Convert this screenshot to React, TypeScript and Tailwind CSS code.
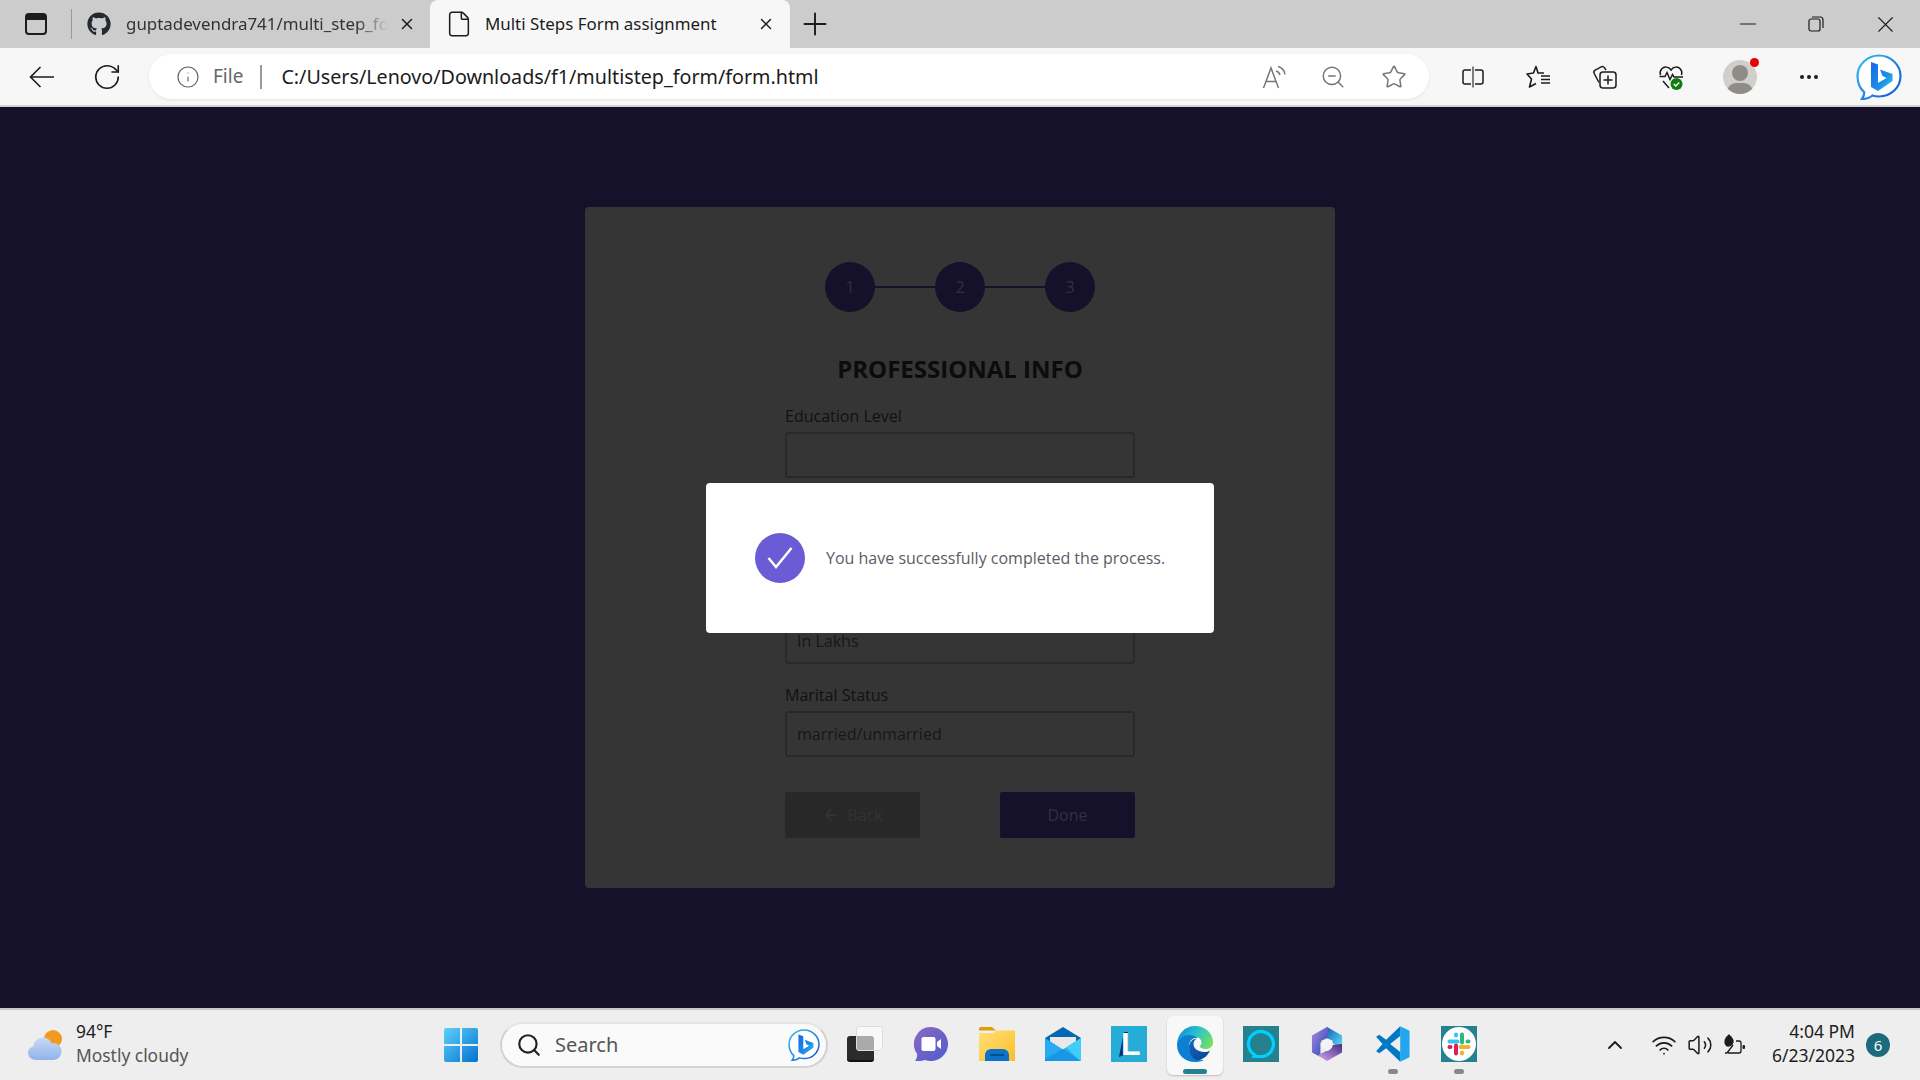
import { ArrowLeft, ChevronUp, File, Info, Minus, Plus, RotateCw, Search, Star, Volume2, Wifi, X, ZoomOut } from "lucide-react";
import { FaGithub } from "react-icons/fa";

// toolbar icons that lucide has no match for
const SplitIcon = () => (
  <svg viewBox="0 0 24 24" className="w-6 h-6 shrink-0" fill="none" stroke="#1c1c1c" strokeWidth="1.5">
    <path d="M10 5H4a2 2 0 0 0-2 2v10a2 2 0 0 0 2 2h6M14 5h6a2 2 0 0 1 2 2v10a2 2 0 0 1-2 2h-6" />
    <path d="M12 1.5v21" stroke="#555" />
  </svg>
);

const FavoritesIcon = () => (
  <svg viewBox="0 0 26 24" className="w-[26px] h-6 shrink-0" fill="none" stroke="#1c1c1c" strokeWidth="1.6" strokeLinejoin="round">
    <path d="M18 8h-6L10 1.500 7.500 8 1 9l4.500 5-2 8 6.500-3.500" />
    <path d="M15 11h9M15 14.500h9M15 18h9" />
  </svg>
);

const CollectionsIcon = () => (
  <svg viewBox="0 0 26 26" className="w-[26px] h-[26px] shrink-0" fill="none" stroke="#1c1c1c" strokeWidth="1.5">
    <path d="M7 18.5L2.2 9.5a2.5 2.5 0 0 1 1-3.3l6-3.4a2.5 2.5 0 0 1 3.2.8l1.6 2.6" />
    <rect x="8" y="8" width="16" height="16" rx="3" />
    <path d="M16 11.5v9M11.5 16h9" />
  </svg>
);

const HealthIcon = () => (
  <svg viewBox="0 0 26 26" className="w-[26px] h-[26px] shrink-0" fill="none">
    <path d="M2.5 11C1 6 5 2.5 8.5 3c2 .2 3.5 1.5 4.500 3 1-1.500 2.500-2.800 4.500-3 3.500-.5 7.500 3 6 8M1.500 12.500H7l2-4 3 7 2.500-5 1.500 2.500h9M5 17l6 7" stroke="#1c1c1c" strokeWidth="1.500" />
    <circle cx="18.500" cy="20" r="6" fill="#107c10" />
    <path d="M15.800 20l2 2 3.400-3.500" stroke="#fff" strokeWidth="1.500" />
  </svg>
);

const ReadAloudIcon = () => (
  <svg viewBox="0 0 26 26" className="w-[26px] h-[26px] shrink-0" fill="none" stroke="#777" strokeWidth="1.500">
    <path d="M1.500 24L9 4l7.500 20M4 17.500h10" />
    <path d="M14 7c2 .5 3.500 2 4 4M16 2.500c3.500 1 6.500 4 7 8" />
  </svg>
);

const BingIcon = ({ size, id }: { size: string; id: string }) => (
  <svg viewBox="0 0 46 46" className={size}>
    <defs>
      <linearGradient id={id} x1="0" y1="0" x2="1" y2="1">
        <stop offset="0" stopColor="#35c1f1" />
        <stop offset="1" stopColor="#1350d8" />
      </linearGradient>
      <linearGradient id={id + "b"} x1="0" y1="0" x2="1" y2="1">
        <stop offset="0" stopColor="#1b66e8" />
        <stop offset="0.6" stopColor="#1b8fe8" />
        <stop offset="1" stopColor="#36c8ee" />
      </linearGradient>
    </defs>
    <path d="M23 1.500C34.500 1.500 44.500 10.500 44.500 22S35 42.500 23 42.500c-2.500 0-4.500-.3-6.500-1-2.500 2-6 3.500-10.500 3.500 1.500-2 2.300-4 2.300-6.700C4 34.500 1.500 29 1.500 22 1.500 10.500 11.500 1.500 23 1.500z" fill="#fff" stroke={`url(#${id})`} strokeWidth="2.200" />
    <path d="M15 8l7 2.500V29l8.500-5-4-2-2.500-6.500 12.500 4.500v7L22 37l-7-4z" fill={`url(#${id}b)`} />
  </svg>
);

const WeatherIcon = () => (
  <svg viewBox="0 0 36 32" className="w-9 h-8 shrink-0">
    <defs>
      <linearGradient id="cloud" x1="0" y1="0" x2="0" y2="1">
        <stop offset="0" stopColor="#c9d9f2" />
        <stop offset="1" stopColor="#8fb4ea" />
      </linearGradient>
    </defs>
    <circle cx="25" cy="10" r="9" fill="#f29a1f" />
    <path d="M8 31c-4.500 0-8-3-8-7 0-3.500 2.500-6 5.500-6.500C6 12 10 8.500 15 8.500c4 0 7.500 2.500 8.500 6 2-.8 4-.5 6 .8 2.500 1.500 4 4 4 6.700 0 5-3.500 9-8.500 9z" fill="url(#cloud)" />
  </svg>
);

const WindowsLogo = () => (
  <svg viewBox="0 0 34 34" className="w-[34px] h-[34px] shrink-0">
    <defs>
      <linearGradient id="win" x1="0" y1="0" x2="1" y2="1">
        <stop offset="0" stopColor="#5fd0fb" />
        <stop offset="1" stopColor="#0272cf" />
      </linearGradient>
    </defs>
    <path d="M0 2a2 2 0 0 1 2-2h14v16H0zM18 0h14a2 2 0 0 1 2 2v14H18zM0 18h16v16H2a2 2 0 0 1-2-2zM18 18h16v14a2 2 0 0 1-2 2H18z" fill="url(#win)" />
  </svg>
);

const TaskViewIcon = () => (
  <div className="relative w-9 h-9">
    <div className="absolute left-0 bottom-0 w-[27px] h-[26px] rounded-[3px] bg-[#2b2b2b] border-b-2 border-[#111]" />
    <div className="absolute right-0 top-0 w-[27px] h-[25px] rounded-[3px] bg-white/60 border border-[#ddd]" />
  </div>
);

const ChatIcon = () => (
  <svg viewBox="0 0 34 34" className="w-[34px] h-[34px]">
    <defs>
      <linearGradient id="chat" x1="0" y1="0" x2="1" y2="1">
        <stop offset="0" stopColor="#8a68c0" />
        <stop offset="1" stopColor="#4f5dd0" />
      </linearGradient>
    </defs>
    <path d="M17 0a17 17 0 1 1-6 32.900c-2.500 1-5.500 1.100-10 1.100 1.500-1.500 2-3.500 2.200-7A17 17 0 0 1 17 0z" fill="url(#chat)" />
    <rect x="7.500" y="10" width="14" height="14" rx="2" fill="#fff" />
    <path d="M23 15l4-3v10l-4-3z" fill="#fff" />
  </svg>
);

const FolderIcon = () => (
  <svg viewBox="0 0 36 34" className="w-9 h-[34px]">
    <defs>
      <linearGradient id="folder" x1="0" y1="0" x2="1" y2="1">
        <stop offset="0" stopColor="#ffe07a" />
        <stop offset="1" stopColor="#fcbf25" />
      </linearGradient>
    </defs>
    <path d="M0 2a2 2 0 0 1 2-2h11l4 3.500h-17z" fill="#dca000" />
    <path d="M0 6h14l4-2.500h18V34H0z" fill="url(#folder)" />
    <path d="M6 34v-6a6 6 0 0 1 6-6h12a6 6 0 0 1 6 6v6z" fill="#0b74c8" />
    <rect x="11" y="27" width="14" height="2" fill="#054d8e" />
  </svg>
);

const MailIcon = () => (
  <svg viewBox="0 0 36 34" className="w-9 h-[34px]">
    <path d="M0 11L18 0l18 11v4H0z" fill="#0566b4" />
    <path d="M5 10h26v12H5z" fill="#e8e8e8" />
    <path d="M0 11l18 11.500L36 11v21a2 2 0 0 1-2 2H2a2 2 0 0 1-2-2z" fill="#28aaf0" />
    <path d="M36 11v21a2 2 0 0 1-1 1.700L21 20.500z" fill="#40cdf7" />
    <path d="M0 34h36L18 22 0 32z" fill="#1a96e6" />
  </svg>
);

const LTile = () => (
  <div className="relative w-9 h-9 bg-[#25acd7] overflow-hidden">
    <div className="absolute left-[8px] top-[6px] w-[9px] h-[25px] bg-[#0b2a78] [clip-path:polygon(55%_0,100%_0,100%_85%,0_100%)]" />
    <span className="absolute left-[10px] top-[0px] text-[32px] leading-[36px] font-bold text-white [font-family:'Liberation_Sans',sans-serif]">L</span>
  </div>
);

const EdgeIcon = () => (
  <svg viewBox="0 0 36 36" className="w-9 h-9">
    <defs>
      <linearGradient id="edgeTop" x1="0" y1="0.3" x2="1" y2="0.7">
        <stop offset="0" stopColor="#0c8fdc" />
        <stop offset="0.5" stopColor="#2fc4c8" />
        <stop offset="1" stopColor="#73e25b" />
      </linearGradient>
      <linearGradient id="edgeLow" x1="0" y1="0" x2="1" y2="1">
        <stop offset="0" stopColor="#0f6cc0" />
        <stop offset="1" stopColor="#0a3f95" />
      </linearGradient>
    </defs>
    <path d="M18 0c10 0 18 7 18 16.500 0 4-3 6.500-7.500 6.500-3 0-5.500-1-5.500-2.500 0-1 1.500-1.500 1.500-4 0-4-4-6-8-6C9 10.500 3 15 0 19 0 8 8 0 18 0z" fill="url(#edgeTop)" />
    <path d="M0 19c1-6 7-10 12-10 6 0 9 3 9 3-4-1-9 2-9 8 0 7 6 14 15 14-3 1.500-6 2-9 2C8 36 0 29 0 19z" fill="#0c7fd0" />
    <path d="M12 21c0-5 4-8.500 8-8.500-2 1-3.500 3-3.500 5.500 0 6 7 8 11 8 2 0 4-.5 5.500-1.500-2 5-6.500 9-12 9.500C16 34 12 28 12 21z" fill="url(#edgeLow)" />
  </svg>
);

const AlexaTile = () => (
  <div className="w-9 h-9 bg-[#26818f] flex items-center justify-center">
    <svg viewBox="0 0 30 30" className="w-[30px] h-[30px]">
      <path d="M9 26A12.500 12.500 0 1 1 15 27.500H7.500z" fill="none" stroke="#00cfff" strokeWidth="3.200" strokeLinejoin="round" />
    </svg>
  </div>
);

const M365Icon = () => (
  <svg viewBox="-1 -1 34 38" className="w-8 h-9">
    <defs>
      <linearGradient id="m1" x1="0" y1="0" x2="1" y2="1">
        <stop offset="0" stopColor="#1f5fb8" />
        <stop offset="1" stopColor="#58dcf7" />
      </linearGradient>
      <linearGradient id="m2" x1="0" y1="0" x2="1" y2="1">
        <stop offset="0" stopColor="#a982e4" />
        <stop offset="1" stopColor="#1f4fae" />
      </linearGradient>
      <linearGradient id="m3" x1="1" y1="0" x2="0" y2="1">
        <stop offset="0" stopColor="#4b3384" />
        <stop offset="1" stopColor="#cba0ec" />
      </linearGradient>
    </defs>
    <path d="M16 1L31 9.500V21L16 13z" fill="url(#m1)" stroke="url(#m1)" strokeWidth="2" strokeLinejoin="round" />
    <path d="M16 1L1 9.500v17L8 30V16l8-3z" fill="url(#m2)" stroke="url(#m2)" strokeWidth="2" strokeLinejoin="round" />
    <path d="M31 19v7.500L16 35l-8-5 8-4 6-6z" fill="url(#m3)" stroke="url(#m3)" strokeWidth="2" strokeLinejoin="round" />
    <path d="M16 12l6 2.500v4.500c0 3-3 5.500-6 6.500-3-1-6-3.500-6-6.500v-4.500z" fill="#f3f3f3" />
  </svg>
);

const VSCodeIcon = () => (
  <svg viewBox="0 0 100 100" className="w-9 h-9">
    <path d="M70 1l26 12.500v73L70 99z" fill="#24a5ef" />
    <path d="M70 1L31 38 12 24 3 30l18 20L3 70l9 6 19-14 39 37V72L42 50l28-22z" fill="#0079c4" />
  </svg>
);

const SlackTile = () => (
  <div className="w-9 h-9 bg-[#26818f] flex items-center justify-center">
    <div className="w-[34px] h-[34px] rounded-full bg-white flex items-center justify-center">
      <svg viewBox="0 0 24 24" className="w-6 h-6">
        <g strokeLinecap="round" strokeWidth="4" fill="none">
          <path d="M2.500 9.500h8" stroke="#36c5f0" />
          <path d="M9 2.500v1" stroke="#36c5f0" />
          <path d="M15 2.500v8" stroke="#2eb67d" />
          <path d="M21.500 9.500h-1" stroke="#2eb67d" />
          <path d="M21.500 15h-8" stroke="#ecb22e" />
          <path d="M15 21.500v-1" stroke="#ecb22e" />
          <path d="M9 21.500v-8" stroke="#e01e5a" />
          <path d="M2.500 15h1" stroke="#e01e5a" />
        </g>
      </svg>
    </div>
  </div>
);

const LeafBattery = () => (
  <svg viewBox="0 0 24 24" className="w-6 h-6 shrink-0" fill="none" stroke="#1c1c1c" strokeWidth="1.300">
    <path d="M6 2C2 5 1 9 3 12c2 2 6 1 7-3 .5-2-2-5-4-7z" fill="#1c1c1c" />
    <path d="M5 20h11a2 2 0 0 0 2-2V10a2 2 0 0 0-2-2h-3M2 20h2l6-8" />
    <rect x="19.500" y="12" width="2.500" height="4" rx="1" fill="#1c1c1c" stroke="none" />
  </svg>
);

const Field = ({ label, placeholder }: { label: string; placeholder?: string }) => (
  <div className="flex flex-col">
    <label className="text-[16px] leading-[22px] text-[#111114]">{label}</label>
    <input
      readOnly
      placeholder={placeholder}
      className="mt-[5px] w-full h-[46px] px-[10px] border-2 border-[#292929] rounded-[3px] bg-transparent text-[16px] outline-none placeholder:text-[#171717]"
    />
  </div>
);

const StepCircle = ({ n }: { n: number }) => (
  <div className="w-[50px] h-[50px] rounded-full bg-[#15112b] flex items-center justify-center text-[16px] text-[#33303f]">{n}</div>
);

const TaskbarSlot = ({ children, active, running }: { children: React.ReactNode; active?: boolean; running?: boolean }) => (
  <div className="relative w-[66px] h-full flex items-center justify-center">
    {active && <div className="absolute left-[5px] right-[5px] top-[6px] bottom-[5px] rounded-[6px] bg-[#f8f8f8] shadow-[0_1px_2px_rgba(0,0,0,0.2)]" />}
    <div className="relative -mt-[2px]">{children}</div>
    {active && <div className="absolute left-1/2 -translate-x-1/2 bottom-[6px] w-[24px] h-[5px] rounded-full bg-[#26818f]" />}
    {running && <div className="absolute left-1/2 -translate-x-1/2 bottom-[6px] w-[10px] h-[5px] rounded-full bg-[#888]" />}
  </div>
);

export default function App() {
  return (
    <div className="w-[1920px] h-[1080px] overflow-hidden flex flex-col bg-[#15112b] [font-family:'Open_Sans',sans-serif]">
      {/* Tab strip */}
      <div className="h-[48px] shrink-0 bg-[#cccccc] flex items-center text-[#1c1c1c] [font-family:'Noto_Sans',sans-serif]">
        <div className="ml-[25px] w-[22px] h-[22px] rounded-[4px] border-2 border-[#1c1c1c] flex flex-col">
          <div className="h-[5px] bg-[#1c1c1c]" />
        </div>
        <div className="ml-[24px] w-px h-[30px] bg-[#999]" />
        <FaGithub className="ml-[15px] w-6 h-6 text-[#24292f]" />
        <div className="ml-[15px] w-[262px] whitespace-nowrap text-[16.900px] text-[#333] [mask-image:linear-gradient(to_right,black_88%,transparent)]">guptadevendra741/multi_step_fo</div>
        <X className="ml-[10px] w-[18px] h-[18px]" strokeWidth={2} />
        <div className="ml-[14px] w-[360px] h-full bg-[#f7f7f7] rounded-t-[8px] flex items-center">
          <File className="ml-[15px] w-[28px] h-[30px] shrink-0" strokeWidth={1.300} />
          <span className="ml-[12px] w-[272px] text-[16.900px] whitespace-nowrap">Multi Steps Form assignment</span>
          <X className="w-[18px] h-[18px]" strokeWidth={2} />
        </div>
        <Plus className="ml-[7px] w-9 h-9" strokeWidth={1.300} />
        <Minus className="ml-auto w-[26px] h-[26px]" strokeWidth={1.100} />
        <svg viewBox="0 0 16 16" className="ml-[47px] w-4 h-4" fill="none" stroke="#1c1c1c" strokeWidth="1.200">
          <rect x="1" y="3" width="11" height="12" rx="2" />
          <path d="M4 1h8a3 3 0 0 1 3 3v8" />
        </svg>
        <X className="ml-[48px] mr-[21px] w-[27px] h-[27px]" strokeWidth={1} />
      </div>

      {/* Address bar */}
      <div className="h-[59px] shrink-0 bg-[#f7f7f7] border-b-2 border-[#d2d2d2] flex items-center">
        <svg viewBox="0 0 25 22" className="ml-[29px] w-[25px] h-[22px] shrink-0" fill="none" stroke="#1c1c1c" strokeWidth="1.600">
          <path d="M25 11H1.500M11.500 1L1.500 11l10 10" />
        </svg>
        <RotateCw className="ml-[38px] w-[30px] h-[30px] text-[#1c1c1c]" strokeWidth={1.300} />
        <div className="ml-[27px] w-[1280px] h-[45px] rounded-full bg-white shadow-[0_1px_3px_rgba(0,0,0,0.08)] flex items-center [font-family:'Noto_Sans',sans-serif]">
          <Info className="ml-[27px] w-6 h-6 text-[#666]" strokeWidth={1.200} />
          <span className="ml-[13px] text-[19px] text-[#666]">File</span>
          <div className="ml-[17px] w-[2px] h-[24px] bg-[#999]" />
          <span className="ml-[19px] text-[19.700px] text-[#1c1c1c] whitespace-nowrap">C:/Users/Lenovo/Downloads/f1/multistep_form/form.html</span>
          <div className="ml-auto"><ReadAloudIcon /></div>
          <ZoomOut className="ml-[32px] w-[26px] h-[26px] text-[#777]" strokeWidth={1.400} />
          <Star className="ml-[35px] mr-[22px] w-[26px] h-[26px] text-[#777]" strokeWidth={1.400} />
        </div>
        <div className="ml-[32px]"><SplitIcon /></div>
        <div className="ml-[41px]"><FavoritesIcon /></div>
        <div className="ml-[40px]"><CollectionsIcon /></div>
        <div className="ml-[40px]"><HealthIcon /></div>
        <div className="relative ml-[39px] w-[34px] h-[34px] rounded-full bg-[#d0cfcc] overflow-hidden shrink-0">
          <div className="absolute left-[9px] top-[5px] w-[16px] h-[16px] rounded-full bg-[#8f8c88]" />
          <div className="absolute left-[4px] top-[23px] w-[26px] h-[18px] rounded-full bg-[#8f8c88]" />
        </div>
        <div className="relative w-0 h-[34px]">
          <div className="absolute -left-[7px] top-[-2px] w-[9px] h-[9px] rounded-full bg-[#e60000]" />
        </div>
        <div className="ml-[43px] flex gap-[3px] w-[20px]">
          <div className="w-[4px] h-[4px] rounded-full bg-[#1c1c1c]" />
          <div className="w-[4px] h-[4px] rounded-full bg-[#1c1c1c]" />
          <div className="w-[4px] h-[4px] rounded-full bg-[#1c1c1c]" />
        </div>
        <div className="ml-[36px]"><BingIcon size="w-[46px] h-[46px]" id="bingTop" /></div>
      </div>

      {/* Page */}
      <div className="flex-1 flex justify-center items-start pt-[100px]">
        <div className="relative w-[750px] h-[681px] bg-[#353535] rounded-[4px] pt-[55px] flex flex-col items-center">
          <div className="flex items-center">
            <StepCircle n={1} />
            <div className="w-[60px] h-[2px] bg-[#15112b]" />
            <StepCircle n={2} />
            <div className="w-[60px] h-[2px] bg-[#15112b]" />
            <StepCircle n={3} />
          </div>
          <h2 className="mt-[40px] text-[24px] leading-[33px] font-bold text-[#0b0b10]">PROFESSIONAL INFO</h2>
          <div className="mt-[20px] w-[350px] flex flex-col gap-[20px]">
            <Field label="Education Level" />
            <Field label="Occupation" />
            <Field label="Annual Income" placeholder="In Lakhs" />
            <Field label="Marital Status" placeholder="married/unmarried" />
          </div>
          <div className="mt-[35px] w-[350px] flex justify-between">
            <button className="w-[135px] h-[46px] rounded-[2px] bg-[#282828] text-[16px] text-[#333333] flex items-center justify-center gap-[7px]">
              <ArrowLeft className="w-[18px] h-[18px]" strokeWidth={2.500} />
              Back
            </button>
            <button className="w-[135px] h-[46px] rounded-[2px] bg-[#15112b] text-[16px] text-[#33303f]">Done</button>
          </div>

          {/* Success toast */}
          <div className="absolute left-1/2 -translate-x-1/2 top-[276px] w-[508px] h-[150px] rounded-[4px] bg-white flex items-center pl-[49px]">
            <div className="w-[50px] h-[50px] rounded-full bg-[#6b5bd5] shrink-0">
              <svg viewBox="0 0 50 50" className="w-[50px] h-[50px]" fill="none" stroke="#fff" strokeWidth="2.500">
                <path d="M13.500 25L21 34l15.500-19" />
              </svg>
            </div>
            <span className="ml-[21px] text-[16px] text-[#5c5c66] whitespace-nowrap">You have successfully completed the process.</span>
          </div>
        </div>
      </div>

      {/* Taskbar */}
      <div className="h-[72px] shrink-0 bg-[#eeeeee] border-t-2 border-[#c8c8c8] flex items-center [font-family:'Noto_Sans',sans-serif]">
        <div className="ml-[28px]"><WeatherIcon /></div>
        <div className="ml-[12px] -mt-[4px] w-[368px] flex flex-col text-[17.400px] leading-[24px]">
          <span className="text-[#1c1c1c]">94°F</span>
          <span className="text-[#555]">Mostly cloudy</span>
        </div>
        <WindowsLogo />
        <div className="ml-[22px] w-[328px] h-[46px] rounded-full bg-[#fafafa] border-2 border-[#d2d2d2] border-t-[#e4e4e4] flex items-center">
          <Search className="ml-[14px] w-[26px] h-[26px] text-[#222]" strokeWidth={2} />
          <span className="ml-[13px] text-[20px] text-[#555]">Search</span>
          <div className="ml-auto mr-[6px] flex"><BingIcon size="w-[32px] h-[32px]" id="bingSearch" /></div>
        </div>
        <div className="ml-[4px] h-full flex">
          <TaskbarSlot><TaskViewIcon /></TaskbarSlot>
          <TaskbarSlot><ChatIcon /></TaskbarSlot>
          <TaskbarSlot><FolderIcon /></TaskbarSlot>
          <TaskbarSlot><MailIcon /></TaskbarSlot>
          <TaskbarSlot><LTile /></TaskbarSlot>
          <TaskbarSlot active><EdgeIcon /></TaskbarSlot>
          <TaskbarSlot><AlexaTile /></TaskbarSlot>
          <TaskbarSlot><M365Icon /></TaskbarSlot>
          <TaskbarSlot running><VSCodeIcon /></TaskbarSlot>
          <TaskbarSlot running><SlackTile /></TaskbarSlot>
        </div>
        <ChevronUp className="ml-[111px] w-6 h-6 text-[#1c1c1c]" strokeWidth={1.800} />
        <Wifi className="ml-[24px] w-[26px] h-[26px] text-[#1c1c1c]" strokeWidth={1.600} />
        <Volume2 className="ml-[10px] w-[26px] h-[26px] text-[#1c1c1c]" strokeWidth={1.400} />
        <div className="ml-[10px]"><LeafBattery /></div>
        <div className="ml-[14px] -mt-[4px] w-[94px] flex flex-col items-end text-[17.500px] leading-[24px] text-[#1c1c1c]">
          <span>4:04 PM</span>
          <span>6/23/2023</span>
        </div>
        <div className="ml-[11px] w-6 h-6 rounded-full bg-[#1b6b7d] text-white text-[15px] flex items-center justify-center">6</div>
      </div>
    </div>
  );
}
